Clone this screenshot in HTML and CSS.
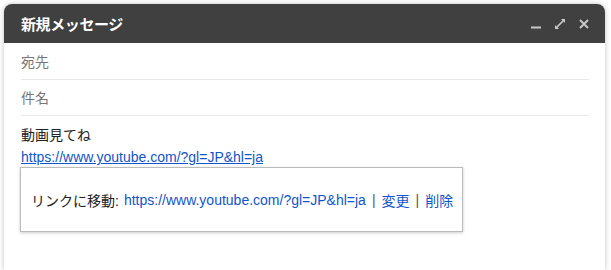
FILE: index.html
```html
<!DOCTYPE html>
<html lang="ja">
<head>
<meta charset="utf-8">
<link rel="stylesheet" href="styles.css">
</head>
<body>
<div class="window">
  <div class="header">
    <span class="title">新規メッセージ</span>
    <div class="controls">
      <svg class="icon" width="10" height="10" viewBox="0 0 10 10"><rect x="0" y="7.5" width="10" height="2" fill="#c8c8c8"/></svg>
      <svg class="icon" width="10" height="10" viewBox="0 0 10 10"><path d="M6 0H10V4L8.6 2.6 2.6 8.6 4 10H0V6L1.4 7.4 7.4 1.4Z" fill="#c8c8c8"/></svg>
      <svg class="icon" width="10" height="10" viewBox="0 0 10 10"><path d="M1 1L9 9M9 1L1 9" stroke="#c8c8c8" stroke-width="2"/></svg>
    </div>
  </div>
  <div class="fields">
    <div class="field">宛先</div>
    <div class="field">件名</div>
  </div>
  <div class="body">
    <div class="line">動画見てね</div>
    <div class="line"><a class="link" href="#">https://www.youtube.com/?gl=JP&amp;hl=ja</a></div>
    <div class="popup">
      <span class="label">リンクに移動:</span>
      <a class="plink" href="#">https://www.youtube.com/?gl=JP&amp;hl=ja</a>
      <span class="sep">|</span>
      <a class="plink" href="#">変更</a>
      <span class="sep">|</span>
      <a class="plink" href="#">削除</a>
    </div>
  </div>
</div>
</body>
</html>
```
FILE: styles.css
```css
html, body {
  margin: 0;
  padding: 0;
  background: #ffffff;
  height: 100%;
  overflow: hidden;
}
body {
  font-family: "Liberation Sans", Arial, "Noto Sans CJK JP", sans-serif;
  font-size: 14px;
  color: #222;
}
.window {
  margin: 4px 0 0 4px;
  width: 601px;
  height: calc(100% - 4px);
  background: #fff;
  border-radius: 8px 8px 0 0;
  box-shadow: 0 0 5px rgba(0,0,0,0.25);
  position: relative;
}
.header {
  height: 39px;
  background: #404040;
  border-radius: 8px 8px 0 0;
  display: flex;
  align-items: center;
  justify-content: space-between;
  padding: 0 16px 0 17px;
}
.title {
  color: #fff;
  font-size: 15px;
  font-weight: bold;
  letter-spacing: -0.4px;
}
.controls {
  display: flex;
  gap: 14px;
  align-items: center;
  padding-top: 1px;
}
.icon { display: block; }
.fields {
  padding: 1px 16px 0 17px;
}
.field {
  height: 35px;
  line-height: 36px;
  border-bottom: 1px solid #e8e8e8;
  color: #777;
}
.body {
  padding: 8px 16px 0 17px;
  position: relative;
}
.line {
  line-height: 22px;
}
.link {
  color: #15c;
  text-decoration: underline;
}
.popup {
  position: absolute;
  left: 16px;
  top: 51px;
  width: 421px;
  height: 63px;
  border: 1px solid #bbb;
  box-shadow: 0 1px 3px rgba(0,0,0,0.2);
  background: #fff;
  display: flex;
  align-items: center;
  gap: 5px;
  padding: 0 10px;
  white-space: nowrap;
}
.label { color: #222; }
.plink { color: #15c; text-decoration: none; }
.sep { color: #555; margin: 0 1px; }
```
